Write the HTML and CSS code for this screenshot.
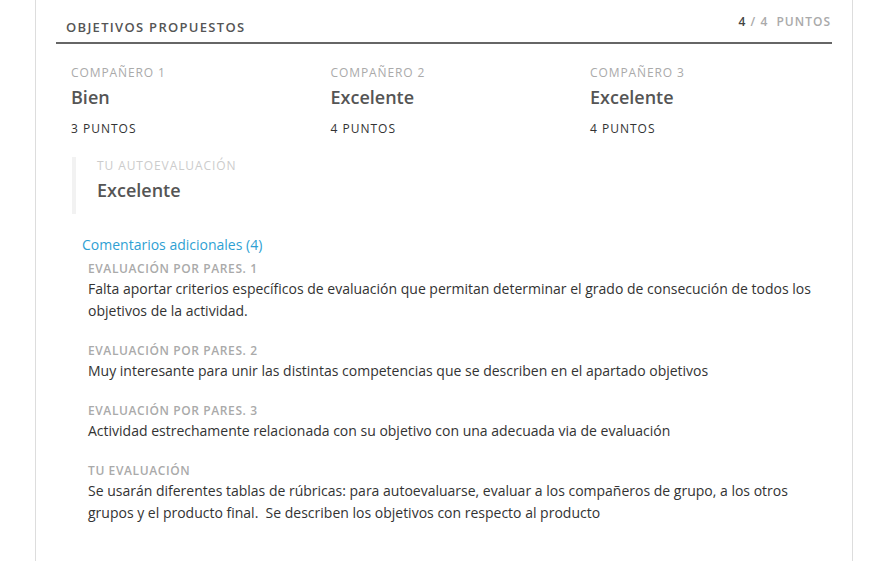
FILE: index.html
```html
<!DOCTYPE html>
<html lang="es">
<head>
  <meta charset="UTF-8">
  <meta name="viewport" content="width=device-width, initial-scale=1.0">
  <title>Objetivos propuestos</title>
  <link rel="stylesheet" href="styles.css">
</head>
<body>
  <section class="card">
    <header class="card-head">
      <h2 class="card-title">Objetivos propuestos</h2>
      <span class="score"><strong>4</strong> / 4 &nbsp;Puntos</span>
    </header>

    <div class="peers">
      <div class="peer">
        <span class="peer-label">Compañero 1</span>
        <span class="peer-value">Bien</span>
        <span class="peer-points">3 puntos</span>
      </div>
      <div class="peer">
        <span class="peer-label">Compañero 2</span>
        <span class="peer-value">Excelente</span>
        <span class="peer-points">4 puntos</span>
      </div>
      <div class="peer">
        <span class="peer-label">Compañero 3</span>
        <span class="peer-value">Excelente</span>
        <span class="peer-points">4 puntos</span>
      </div>
    </div>

    <div class="self">
      <span class="self-label">Tu autoevaluación</span>
      <span class="self-value">Excelente</span>
    </div>

    <a class="comments-link" href="#">Comentarios adicionales (4)</a>
    <div class="comments">
      <div class="comment">
        <h3 class="comment-label">Evaluación por pares. 1</h3>
        <p class="comment-text">Falta aportar criterios específicos de evaluación que permitan determinar el grado de consecución de todos los objetivos de la actividad.</p>
      </div>
      <div class="comment">
        <h3 class="comment-label">Evaluación por pares. 2</h3>
        <p class="comment-text">Muy interesante para unir las distintas competencias que se describen en el apartado objetivos</p>
      </div>
      <div class="comment">
        <h3 class="comment-label">Evaluación por pares. 3</h3>
        <p class="comment-text">Actividad estrechamente relacionada con su objetivo con una adecuada via de evaluación</p>
      </div>
      <div class="comment">
        <h3 class="comment-label">Tu evaluación</h3>
        <p class="comment-text">Se usarán diferentes tablas de rúbricas: para autoevaluarse, evaluar a los compañeros de grupo, a los otros grupos y el producto final.&nbsp; Se describen los objetivos con respecto al producto</p>
      </div>
    </div>
  </section>
</body>
</html>
```

FILE: styles.css
```css
* {
  box-sizing: border-box;
}
body {
  margin: 0;
  background: #fff;
  font-family: "Open Sans", "Liberation Sans", sans-serif;
  color: #333;
}
h2,
h3,
p {
  margin: 0;
}
.card {
  margin-left: 35px;
  width: 818px;
  min-height: 561px;
  padding: 0 20px;
  border-left: 1px solid #ddd;
  border-right: 1px solid #ddd;
}
.card-head {
  display: flex;
  justify-content: space-between;
  align-items: flex-start;
  padding: 14px 1px 6px 10px;
  border-bottom: 2px solid #666;
}
.card-title {
  margin-top: 4px;
  font-size: 13px;
  line-height: 18px;
  font-weight: 600;
  text-transform: uppercase;
  letter-spacing: 1.3px;
  color: #555;
}
.score {
  font-size: 12px;
  line-height: 16px;
  font-weight: 600;
  text-transform: uppercase;
  letter-spacing: 1px;
  color: #aaa;
}
.score strong {
  font-weight: 600;
  color: #444;
}
.peers {
  display: grid;
  grid-template-columns: repeat(3, 259.5px);
  margin-top: 21px;
  padding-left: 15px;
}
.peer {
  display: flex;
  flex-direction: column;
}
.peer-label,
.self-label {
  font-size: 12px;
  line-height: 16px;
  text-transform: uppercase;
  letter-spacing: 0.9px;
  color: #aaa;
}
.peer-value,
.self-value {
  margin-top: 4px;
  font-size: 18px;
  line-height: 24px;
  font-weight: 600;
  color: #555;
}
.peer-points {
  margin-top: 12px;
  font-size: 12px;
  line-height: 16px;
  text-transform: uppercase;
  letter-spacing: 1px;
  color: #333;
}
.self {
  display: flex;
  flex-direction: column;
  margin: 20px 0 0 16px;
  padding: 1px 0 12px 21px;
  border-left: 4px solid #f2f2f2;
}
.self-label {
  color: #ccc;
}
.comments-link {
  display: block;
  margin: 21px 0 0 26px;
  font-size: 14px;
  line-height: 20px;
  color: #2f9fd3;
  text-decoration: none;
}
.comments {
  padding-left: 32px;
  margin-top: 6px;
}
.comment + .comment {
  margin-top: 21px;
}
.comment-label {
  font-size: 12px;
  line-height: 16px;
  font-weight: 600;
  text-transform: uppercase;
  letter-spacing: 0.6px;
  color: #aaa;
}
.comment-text {
  margin-top: 1px;
  font-size: 14px;
  line-height: 22px;
  color: #333;
}
```
